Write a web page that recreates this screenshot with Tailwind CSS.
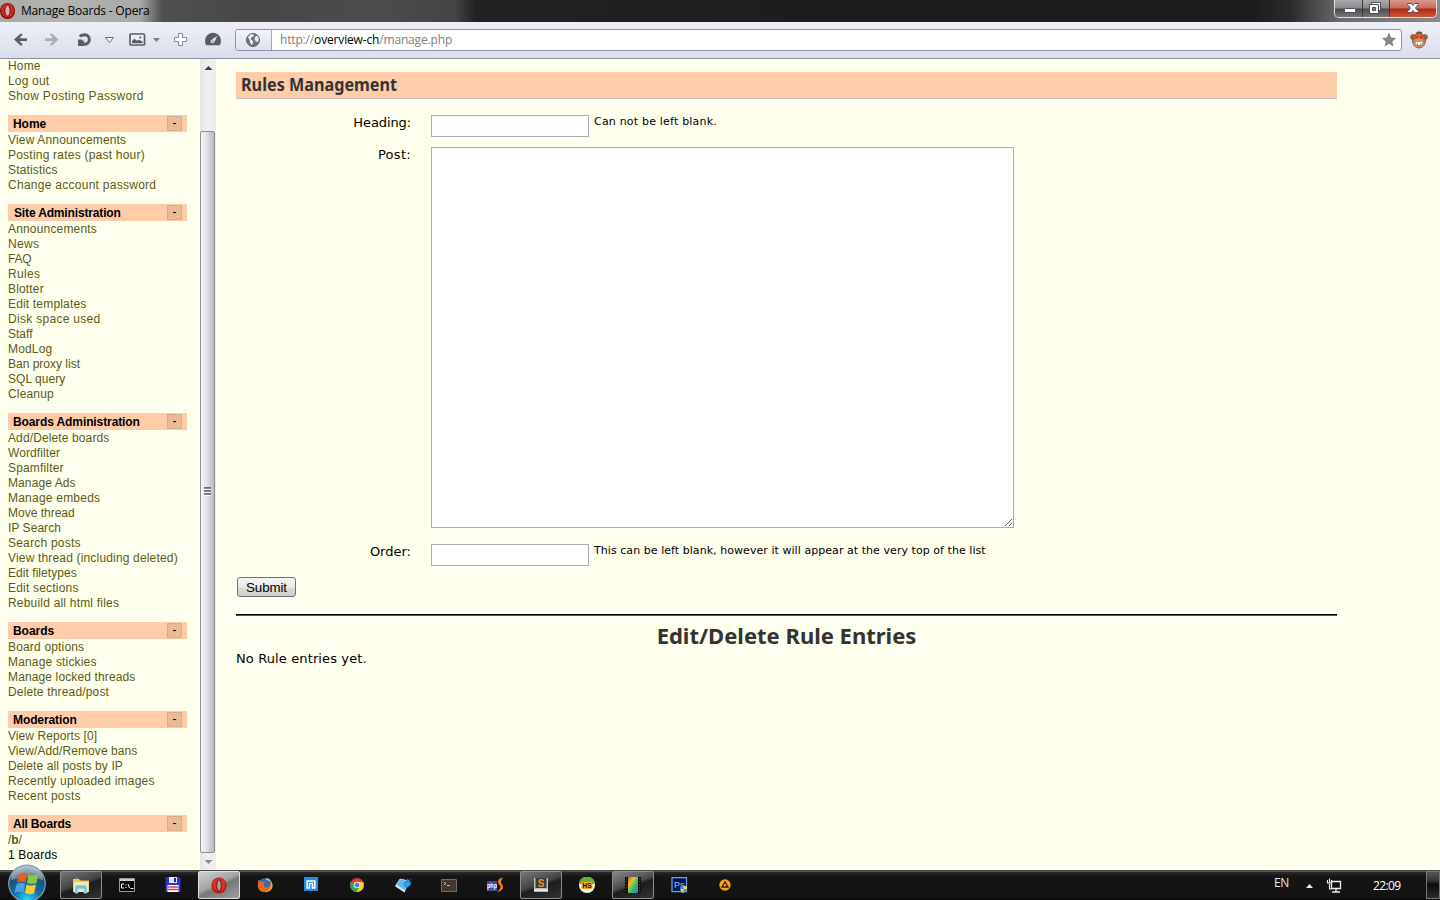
<!DOCTYPE html>
<html lang="en">
<head>
<meta charset="utf-8">
<title>Manage Boards - Opera</title>
<script src="https://cdn.jsdelivr.net/npm/@tailwindcss/browser@4"></script>
</head>
<body class="w-[1440px] h-[900px] overflow-hidden flex flex-col bg-[#ffffee] text-black">

<!-- Title bar -->
<header class="h-[22px] shrink-0 flex items-start justify-between bg-[linear-gradient(90deg,#a9a9a6_0px,#b4b4b2_60px,#a9a9a9_140px,#505050_162px,#474747_250px,#4c4c4c_380px,#444_455px,#222_475px,#1d1d1d_800px,#1c1c1c_1250px,#2a2a2a_1290px,#6b6b6b_1340px,#8a8a8a_1440px)]">
  <div class="flex items-center h-[22px]">
    <svg class="w-4 h-[22px]" viewBox="0 0 16 22"><ellipse cx="7.500" cy="11" rx="7.500" ry="8" fill="#7a0a0a"/><ellipse cx="7.500" cy="10.500" rx="6.500" ry="7" fill="#d8261f"/><ellipse cx="7.500" cy="10.700" rx="2.600" ry="5.400" fill="#c9b9b0" stroke="#7d1411"/></svg>
    <span class="ml-[5px] text-[12px] leading-[22px] tracking-[-0.2px] font-['Open_Sans','Noto_Sans',sans-serif] whitespace-nowrap">Manage Boards - Opera</span>
  </div>
  <div class="flex h-[18px] w-[103px] mr-[3px] rounded-b-[5px] border border-t-0 border-[#e0e0e0] overflow-hidden">
    <div class="w-[28px] border-r border-[#3a3a3a] bg-[linear-gradient(#aaa_0,#898989_8px,#4b4b4b_9px,#777_17px)]"><svg class="block w-[28px] h-[17px]" viewBox="0 0 28 17"><rect x="9.500" y="8.500" width="11" height="4" rx="1" fill="#fff" stroke="#4d4d5d"/></svg></div>
    <div class="w-[27px] border-r border-[#3a3a3a] bg-[linear-gradient(#aaa_0,#898989_8px,#4b4b4b_9px,#777_17px)]"><svg class="block w-[27px] h-[17px]" viewBox="0 0 27 17"><path d="M8.500 2.500h9v8h-9z" fill="#fff" stroke="#4d4d5d"/><path d="M6.500 4.500h9v9h-9z" fill="#fff" stroke="#4d4d5d"/><path d="M9.500 7.500h3v3h-3z" fill="#888" stroke="#4d4d5d"/></svg></div>
    <div class="flex-1 bg-[linear-gradient(#d79a8d_0,#c96a58_8px,#b02a12_9px,#d0563a_17px)]"><svg class="block w-[46px] h-[17px]" viewBox="0 0 46 17"><path d="M17.500 3.500h4l1.500 2 1.500-2h4v1l-3 3.500 3 3.500v1h-4l-1.500-2-1.500 2h-4v-1l3-3.500-3-3.500z" fill="#fff" stroke="#54506a"/></svg></div>
  </div>
</header>

<!-- Browser toolbar -->
<nav class="h-[37px] shrink-0 flex items-start border-b border-[#8b8e9f] bg-linear-to-b from-[#eef0f8] to-[#dadeec]">
  <svg class="w-[235px] h-[36px] shrink-0" viewBox="0 22 235 36">
    <path d="M14 39.500l6.500-5.800h1.800v1.300l-3 3.200H27v2.700h-7.700l3 3.200v1.300h-1.800z" fill="#5a5d66"/>
    <path d="M58.500 39.500l-6.500-5.800h-1.800v1.300l3 3.200H45v2.700h8.200l-3 3.200v1.300H52z" fill="#a9acb7"/>
    <path d="M79.800 36.600Q81.500 34.700 84.800 34.700a4.800 4.800 0 1 1-.5 9.600" fill="none" stroke="#5a5d66" stroke-width="3"/>
    <path d="M78 39.500h6.500v6.500H78z" fill="#5a5d66"/><path d="M81.500 39.300h3.200v3z" fill="#e5e8f2"/>
    <path d="M105.500 37.500h8l-4 5z" fill="#fff" stroke="#6a6d76"/>
    <rect x="130" y="34" width="14.500" height="11" rx=".8" fill="#eceef5" stroke="#5a5d66" stroke-width="1.700"/>
    <path d="M132 43.300v-2.300l2.500-2.200 2.500 2 2-1 3.500 1.700v1.800z" fill="#5a5d66"/><circle cx="140.300" cy="37.500" r="1.100" fill="#5a5d66"/>
    <path d="M153 38h7l-3.500 4z" fill="#7a7d87"/>
    <path d="M178.500 33.500h4v4h4v4h-4v4h-4v-4h-4v-4h4z" fill="#fff" stroke="#858894"/>
    <path d="M206.300 45.200a8 8 0 1 1 13.400 0z" fill="#5a5d66"/><path d="M211.300 42.700a2 2 0 0 1 .5-3l5.500-4-2.800 6a2 2 0 0 1-3.200 1z" fill="#eceef5"/><circle cx="212.900" cy="41.200" r=".8" fill="#5a5d66"/>
  </svg>
  <div class="mt-[7px] w-[1167px] h-[22px] flex rounded-[3px] border border-[#8f92a3] bg-white overflow-hidden">
    <div class="w-[36px] h-full border-r border-[#a5a8b8] bg-linear-to-b from-[#f2f4fa] to-[#dde1ee]">
      <svg class="w-[35px] h-[20px]" viewBox="236 30 35 20"><circle cx="253" cy="40" r="6.500" fill="#70737b" stroke="#5c5f67"/><path d="M248 37l3-3 3 .5-.5 2-2 .8-.8 2 2 1.500.5 1.700-1.500 2.500-1.500-2-.3-2zM255 37l2-1.500 2 3-1 3.500-2-.5-1.500-2z" fill="#e8ebf2"/></svg>
    </div>
    <div class="flex-1 pl-2 text-[12px] leading-[20px] tracking-[-0.16px] text-[#808080] font-['Open_Sans','Noto_Sans',sans-serif]">http://<span class="text-black">overview-ch</span>/manage.php</div>
    <svg class="w-[16px] h-[20px] mr-[4px]" viewBox="0 0 16 20"><path d="M8 2.500l2.100 4.900 5.100.5-3.900 3.500 1.200 5.200L8 13.800l-4.500 2.800 1.200-5.200L.8 7.900l5.100-.5z" fill="#85878c"/></svg>
  </div>
  <svg class="ml-[8px] mt-[8px] w-[18px] h-[20px]" viewBox="0 0 18 20"><circle cx="3" cy="7" r="2.500" fill="#b96436" stroke="#7b432a" stroke-width=".6"/><circle cx="15" cy="7" r="2.500" fill="#b96436" stroke="#7b432a" stroke-width=".6"/><path d="M6 3.500l1-2 1 1 1-2 1 2 2-1 0 2z" fill="#6b3a22"/><ellipse cx="9" cy="10.500" rx="6.500" ry="7.500" fill="#b5703f" stroke="#7b432a" stroke-width=".8"/><ellipse cx="9" cy="12.800" rx="5.600" ry="4.500" fill="#d99468"/><rect x="5.300" y="6" width="2.500" height="2.500" fill="#f0281f"/><rect x="10" y="6" width="2.500" height="2.500" fill="#f0281f"/><path d="M5 11.500l8-.5q.3 4.500-4 4.500t-4-4z" fill="#fff" stroke="#854b30" stroke-width=".6"/><path d="M7.500 11.500v3.500M10.500 11.500v3.500" stroke="#b98770" stroke-width=".6"/></svg>
</nav>

<div class="h-[811px] shrink-0 flex overflow-hidden">
  <!-- Admin menu -->
  <aside class="w-[200px] shrink-0 pl-2 pr-[13px] text-[12px] leading-[15px] tracking-[0.17px] text-[#5b5b14] whitespace-nowrap font-['Liberation_Sans',Arial,sans-serif]">
    <ul><li>Home</li><li>Log out</li><li class="tracking-[0.3px]">Show Posting Password</li></ul>
    <h2 class="mt-[11px] mb-px h-[17px] pl-[5px] pr-[5px] flex items-center justify-between bg-[#ffccaa] text-black font-bold tracking-[-0.05px] leading-[17px]"><span class="pt-px">Home</span><span class="w-[15px] h-[15px] border border-[#d9ab8e] bg-[#edba98] text-center leading-[12px] font-normal">-</span></h2>
    <ul><li>View Announcements</li><li class="tracking-[0.22px]">Posting rates (past hour)</li><li>Statistics</li><li class="tracking-[0.27px]">Change account password</li></ul>
    <h2 class="mt-[11px] mb-px h-[17px] pl-[6px] pr-[5px] flex items-center justify-between bg-[#ffccaa] text-black font-bold tracking-[-0.15px] leading-[17px]"><span class="pt-px">Site Administration</span><span class="w-[15px] h-[15px] border border-[#d9ab8e] bg-[#edba98] text-center leading-[12px] font-normal">-</span></h2>
    <ul><li>Announcements</li><li class="tracking-[0.3px]">News</li><li class="tracking-[-0.2px]">FAQ</li><li class="tracking-[0.3px]">Rules</li><li>Blotter</li><li>Edit templates</li><li class="tracking-[0.3px]">Disk space used</li><li class="tracking-[0px]">Staff</li><li>ModLog</li><li class="tracking-[0px]">Ban proxy list</li><li class="tracking-[0.03px]">SQL query</li><li>Cleanup</li></ul>
    <h2 class="mt-[11px] mb-px h-[17px] pl-[5px] pr-[5px] flex items-center justify-between bg-[#ffccaa] text-black font-bold tracking-[-0.1px] leading-[17px]"><span class="pt-px">Boards Administration</span><span class="w-[15px] h-[15px] border border-[#d9ab8e] bg-[#edba98] text-center leading-[12px] font-normal">-</span></h2>
    <ul><li class="tracking-[0.12px]">Add/Delete boards</li><li class="tracking-[0.1px]">Wordfilter</li><li>Spamfilter</li><li class="tracking-[0.1px]">Manage Ads</li><li class="tracking-[0.22px]">Manage embeds</li><li class="tracking-[0px]">Move thread</li><li class="tracking-[0.05px]">IP Search</li><li class="tracking-[0.22px]">Search posts</li><li>View thread (including deleted)</li><li class="tracking-[0.05px]">Edit filetypes</li><li class="tracking-[0.2px]">Edit sections</li><li class="tracking-[0.2px]">Rebuild all html files</li></ul>
    <h2 class="mt-[11px] mb-px h-[17px] pl-[5px] pr-[5px] flex items-center justify-between bg-[#ffccaa] text-black font-bold tracking-[-0.05px] leading-[17px]"><span class="pt-px">Boards</span><span class="w-[15px] h-[15px] border border-[#d9ab8e] bg-[#edba98] text-center leading-[12px] font-normal">-</span></h2>
    <ul><li>Board options</li><li>Manage stickies</li><li class="tracking-[0.13px]">Manage locked threads</li><li>Delete thread/post</li></ul>
    <h2 class="mt-[11px] mb-px h-[17px] pl-[5px] pr-[5px] flex items-center justify-between bg-[#ffccaa] text-black font-bold tracking-[-0.1px] leading-[17px]"><span class="pt-px">Moderation</span><span class="w-[15px] h-[15px] border border-[#d9ab8e] bg-[#edba98] text-center leading-[12px] font-normal">-</span></h2>
    <ul><li class="tracking-[0.08px]">View Reports [0]</li><li class="tracking-[0.08px]">View/Add/Remove bans</li><li class="tracking-[0.1px]">Delete all posts by IP</li><li class="tracking-[0.22px]">Recently uploaded images</li><li class="tracking-[0.22px]">Recent posts</li></ul>
    <h2 class="mt-[11px] mb-px h-[17px] pl-[5px] pr-[5px] flex items-center justify-between bg-[#ffccaa] text-black font-bold tracking-[-0.2px] leading-[17px]"><span class="pt-px">All Boards</span><span class="w-[15px] h-[15px] border border-[#d9ab8e] bg-[#edba98] text-center leading-[12px] font-normal">-</span></h2>
    <ul><li class="tracking-[-0.1px]">/<b>b</b>/</li><li class="text-black">1 Boards</li></ul>
  </aside>

  <!-- Menu scrollbar -->
  <div class="w-[16px] shrink-0 flex flex-col bg-linear-to-r from-[#e6e6e8] via-[#f0f0f1] to-[#ececee]">
    <svg class="w-4 h-[72px]" viewBox="0 0 16 72"><path d="M4.500 11h8L8.500 7z" fill="#404040"/></svg>
    <div class="h-[722px] w-[15px] flex items-center justify-center rounded-[2px] border border-[#8e8f96] bg-linear-to-r from-[#f6f6f7] via-[#dedee1] to-[#b9b9bf]">
      <svg class="w-[9px] h-[10px]" viewBox="0 0 9 10"><path d="M1 1h7M1 4h7M1 7h7" stroke="#4a4a4e" stroke-width="1.400"/><path d="M1 2.300h7M1 5.300h7M1 8.300h7" stroke="#fff" stroke-width="1"/></svg>
    </div>
    <svg class="w-4 h-[17px]" viewBox="0 0 16 17"><path d="M4.500 7h8l-4 4z" fill="#8a8a8a"/></svg>
  </div>

  <!-- Page -->
  <main class="w-[1121px] pl-[20px] pt-[13px] text-[13px] font-[Verdana,'DejaVu_Sans',sans-serif]">
    <h1 class="h-[27px] pl-[5px] bg-[#ffccaa] border-b border-[#c8c4cc] text-[#333] text-[17.300px] leading-[26px] font-bold whitespace-nowrap font-['Trebuchet_MS','Noto_Sans',sans-serif]"><span class="inline-block origin-left scale-x-[0.937]">Rules Management</span></h1>
    <div class="mt-4 h-[22px] flex">
      <label class="w-[175px] text-right leading-[16px] tracking-[-0.1px]">Heading:</label>
      <input class="ml-5 w-[158px] h-[22px] border border-[#abadb3] bg-white">
      <span class="ml-[5px] text-[11px] leading-[13px] tracking-[0.2px] whitespace-nowrap">Can not be left blank.</span>
    </div>
    <div class="mt-[10px] h-[381px] flex">
      <label class="w-[175px] text-right leading-[16px] tracking-[0.3px]">Post:</label>
      <textarea class="ml-5 w-[583px] h-[381px] border border-[#abadb3] bg-white"></textarea>
    </div>
    <div class="mt-4 h-[22px] flex">
      <label class="w-[175px] text-right leading-[16px]">Order:</label>
      <input class="ml-5 w-[158px] h-[22px] border border-[#abadb3] bg-white">
      <span class="ml-[5px] text-[11px] leading-[13px] tracking-[0.055px] whitespace-nowrap">This can be left blank, however it will appear at the very top of the list</span>
    </div>
    <button class="block mt-[11px] ml-px w-[59px] h-[20px] pt-px rounded-[3px] border border-[#707070] bg-[linear-gradient(#f3f3f3_0,#ebebeb_9px,#dcdcdc_10px,#cfcfcf_18px)] text-[13.330px] leading-[17px] tracking-[-0.1px] font-['Liberation_Sans',Arial,sans-serif]">Submit</button>
    <hr class="mt-[17px] h-[2px] border-t border-b border-t-black border-b-[#555]">
    <h2 class="mt-[5px] h-[28px] text-center text-[#333] text-[22px] leading-[28px] font-bold font-['Trebuchet_MS','Noto_Sans',sans-serif]"><span class="inline-block">Edit/Delete Rule Entries</span></h2>
    <p class="leading-[16px] mt-[2px] tracking-[0.12px]">No Rule entries yet.</p>
  </main>
</div>

<!-- Taskbar -->
<footer class="h-[30px] shrink-0 flex items-start bg-[linear-gradient(#161616_0,#777_1px,#2b2b2b_2px,#151515_6px,#121212_29px,#000_30px)]">
  <div class="w-[58px] h-[30px] relative">
    <svg class="absolute left-[7px] -top-[6px] w-[40px] h-[36px]" viewBox="0 0 40 36">
      <defs><radialGradient id="orb" cx=".5" cy=".95" r=".9"><stop offset="0" stop-color="#2fd6ff"/><stop offset=".4" stop-color="#1271a5"/><stop offset=".75" stop-color="#225072"/><stop offset="1" stop-color="#91a9ba"/></radialGradient></defs>
      <circle cx="20" cy="19.500" r="18.300" fill="url(#orb)" stroke="#7fa3b8" stroke-width="1.200"/>
      <path d="M4 16a16 14 0 0 1 32 0q-16-5-32 0z" fill="#fff" opacity=".3"/>
      <path d="M12 10.500q4-3 8-.5l-1.500 8.500q-4-2-8.500.5z" fill="#ee5a24"/><path d="M21.500 10.500q4.500 2 10-.5l-2 9q-5 2-9.500 0z" fill="#8cc541"/><path d="M9.500 20.500q4.500-3 8.500-.5l-1.500 8.500q-4-2-9 .5z" fill="#4aa4ea"/><path d="M19.500 20.500q4.500 2 9.500 0l-2 9q-5 1.500-9-.5z" fill="#fdc830"/>
    </svg>
  </div>
  <div class="flex h-[30px]">
    <div class="w-[46px] px-[2px] pt-px"><div class="h-[28px] flex items-center justify-center rounded-[2px] border border-[#8d8d8d] bg-[linear-gradient(160deg,#777,#444_45%,#1c1c1c_55%,#333)]">
      <svg class="w-[18px] h-[18px]" viewBox="0 0 18 18"><path d="M1 3h6l1.500 1.500H17V16H1z" fill="#e5cb69"/><path d="M2 6h14.500v10H2z" fill="#f8e8a0"/><path d="M3 17v-6q0-2 2-2h8q2 0 2 2v6h-3v-4H6v4z" fill="#71bfe6" stroke="#d7f0fb" stroke-width=".7"/><path d="M3 2h3" stroke="#60b34b"/></svg></div></div>
    <div class="w-[46px] flex items-center justify-center"><svg class="w-[16px] h-[14px]" viewBox="0 0 16 14"><path d="M.5.5h15v13H.5z" fill="#000" stroke="#9a9a9a"/><path d="M1 2h14" stroke="#ccc" stroke-width="2"/><path d="M5 6H2.500v4H5M7 6.500v1M7 9v1M9 6l1.500 4M11.500 10.500h3" fill="none" stroke="#fff"/></svg></div>
    <div class="w-[46px] flex items-center justify-center"><svg class="w-[16px] h-[16px]" viewBox="0 0 16 16"><path d="M1 0h13l1.500 1.500V15H.5V0z" fill="#2736d2"/><path d="M4 0h8v6H4z" fill="#dde3f8"/><path d="M9 1h2v4H9z" fill="#1c2486"/><path d="M2.500 8h11v7h-11z" fill="#fff"/><path d="M3 10h10M3 12.500h10" stroke="#e43b45" stroke-width="1.300"/></svg></div>
    <div class="w-[46px] px-[2px] pt-px"><div class="h-[28px] flex items-center justify-center rounded-[2px] border border-[#e0e0e0] bg-[linear-gradient(155deg,#d0d0d0,#a4a4a4_45%,#777_55%,#a0a0a0)]">
      <svg class="w-[16px] h-[17px]" viewBox="0 0 16 17"><ellipse cx="8" cy="8.500" rx="7.500" ry="8" fill="#b6120e"/><ellipse cx="8" cy="8" rx="6.500" ry="7" fill="#dc3025"/><ellipse cx="8" cy="8.500" rx="2.300" ry="5.800" fill="#a0a0a0" stroke="#750d0b"/></svg></div></div>
    <div class="w-[46px] flex items-center justify-center"><svg class="w-[16px] h-[16px]" viewBox="0 0 16 16"><circle cx="8" cy="8" r="6.800" fill="#2d6fb5"/><path d="M9 2q3 0 4 2" stroke="#7fc5ef" stroke-width="2" fill="none"/><path d="M1.500 2.500L4 4.500l4 .8-1.500 2 1 2.500 3 1 2.500-2.500.5-5q2.500 3 1.500 7-2 5-7 5Q.5 15 .8 8z" fill="#e7681d"/><path d="M13 4q2.500 4 0 8-2 2.500-5 3 6 0 7.500-5 .5-4-2.500-6z" fill="#f7b72d"/></svg></div>
    <div class="w-[46px] flex items-center justify-center pb-[3px]"><svg class="w-[14px] h-[14px]" viewBox="0 0 14 14"><path d="M0 0h14v14H0z" fill="#228be8"/><path d="M3.200 11V4h7.600v7H8.500V6.500h-3V11z" fill="none" stroke="#fff" stroke-width="1.500"/></svg></div>
    <div class="w-[46px] flex items-center justify-center"><svg class="w-[14px] h-[14px]" viewBox="0 0 14 14"><circle cx="7" cy="7" r="7" fill="#e0382b"/><path d="M7 7L.9 3.600A7 7 0 0 0 6.500 14l3.200-5.500z" fill="#2fa44c"/><path d="M7 7l2.700 1.500L6.500 14A7 7 0 0 0 13.200 4H7z" fill="#f7cc1f"/><circle cx="7" cy="7" r="3.300" fill="#fff"/><circle cx="7" cy="7" r="2.500" fill="#4482ea"/></svg></div>
    <div class="w-[46px] flex items-center justify-center"><svg class="w-[17px] h-[17px]" viewBox="0 0 17 17"><path d="M5 2l9 2L9.500 14.500.500 9z" fill="#67b8ea" stroke="#d8eef8" stroke-width=".8"/><path d="M.5 9.500l9 6 .7-2-9-6z" fill="#d8e9f2"/><path d="M12 4.500l1-3M14 5l2-3M9 6.500q0 4 3.500 3.500 3-1 3.500-4.500l-5-1.500z" stroke="#1687cf" fill="#2ea5e8"/></svg></div>
    <div class="w-[46px] flex items-center justify-center"><svg class="w-[16px] h-[13px]" viewBox="0 0 16 13"><path d="M.5.5h15v12H.5z" fill="#43372f" stroke="#786b60"/><path d="M3 3l2 1.500L3 6M6 6.500h3" fill="none" stroke="#ddd" stroke-width=".8"/></svg></div>
    <div class="w-[46px] flex items-center justify-center"><svg class="w-[17px] h-[16px]" viewBox="0 0 17 16"><path d="M0 4h10v10H0z" fill="#434a9e"/><text x="0" y="11" font-family="Liberation Sans" font-size="8" font-weight="bold" fill="#fff" textLength="10" lengthAdjust="spacingAndGlyphs">php</text><path d="M16 .5q-5 1-5 4 0 2 2 4t-3 6.500q6-1 6-5 0-2-1.500-3.500T16 .5z" fill="#f47b20"/></svg></div>
    <div class="w-[46px] px-[2px] pt-px"><div class="h-[28px] flex items-center justify-center rounded-[2px] border border-[#8d8d8d] bg-[linear-gradient(160deg,#777,#444_45%,#1c1c1c_55%,#333)]">
      <svg class="w-[16px] h-[16px]" viewBox="0 0 16 16"><path d="M1 1h14v13.500H1z" fill="#bcbcbc"/><path d="M2.500 1h11v10h-11z" fill="#3a3a3a"/><path d="M1 12.500h14v2H1z" fill="#eee"/><text x="4.800" y="9.500" font-family="Liberation Sans" font-size="10" font-weight="bold" fill="#f39622">S</text></svg></div></div>
    <div class="w-[46px] flex items-center justify-center"><svg class="w-[16px] h-[16px]" viewBox="0 0 16 16"><circle cx="8" cy="8" r="8" fill="#f5f5f0"/><path d="M0 7a8 7.500 0 0 1 16 0z" fill="#65b22e"/><rect x="2.500" y="5" width="11" height="7" rx="1" fill="#f9a51a"/><text x="3.500" y="11" font-family="Liberation Sans" font-size="7" font-weight="bold" fill="#1a1200" textLength="9" lengthAdjust="spacingAndGlyphs">HS</text></svg></div>
    <div class="w-[46px] px-[2px] pt-px"><div class="h-[28px] flex items-center justify-center rounded-[2px] border border-[#8d8d8d] bg-[linear-gradient(160deg,#888,#4c4c4c_45%,#1c1c1c_55%,#333)]">
      <svg class="w-[16px] h-[16px]" viewBox="0 0 16 16"><defs><linearGradient id="film" x1="0" y1="0" x2="1" y2="1"><stop offset="0" stop-color="#e8452a"/><stop offset=".3" stop-color="#f3c426"/><stop offset=".6" stop-color="#3cc06a"/><stop offset="1" stop-color="#2878d8"/></linearGradient></defs><path d="M0 0h16v16H0z" fill="#0c0c0c"/><path d="M3 0h10v16H3z" fill="url(#film)"/><path d="M1.300 1v15M14.700 1v15" stroke="#555" stroke-width="1" stroke-dasharray="1.500 1.500"/></svg></div></div>
    <div class="w-[46px] flex items-center justify-center"><svg class="w-[17px] h-[16px]" viewBox="0 0 17 16"><path d="M1 .7h14.500v14H1z" fill="#0a1450" stroke="#6fa4ee" stroke-width="1.200"/><text x="3" y="10.500" font-family="Liberation Sans" font-size="9" fill="#8fc0ff">Ps</text><path d="M9 9.500q2 0 3.500-1.500Q14 9.500 16 9.500q0 5-3.500 6.500Q9 14.500 9 9.500z" fill="#3b8be6"/><path d="M12.500 8Q14 9.500 16 9.500v2.500h-3.500zM9.200 12h3.300v4q-2.800-1-3.300-4z" fill="#f8d54a"/></svg></div>
    <div class="w-[46px] flex items-center justify-center"><svg class="w-[12px] h-[12px]" viewBox="0 0 12 12"><circle cx="6" cy="6" r="5.700" fill="#f6a41c"/><path d="M6 2.800L9 8H3z" fill="none" stroke="#2d1c00" stroke-width="1.300"/></svg></div>
  </div>
  <div class="flex-1"></div>
  <div class="flex h-[30px] text-[#e8e8e8] text-[12px] font-['Open_Sans','Noto_Sans',sans-serif]">
    <span class="w-[32px] leading-[26px] tracking-[-0.3px]">EN</span>
    <svg class="w-[38px] h-[30px]" viewBox="1306 870 38 30"><path d="M1306 888h7l-3.500-4z" fill="#eee"/><path d="M1331.500 881.500h9v7h-9z" fill="#111" stroke="#eee" stroke-width="1.300"/><path d="M1336 889v3M1332 892h8" stroke="#eee" stroke-width="1.400"/><path d="M1327.500 880v3h4v-3M1329.500 878.500v4M1329.500 884v5h2" fill="none" stroke="#eee" stroke-width="1.100"/></svg>
    <span class="ml-[29px] w-[53px] leading-[31px] tracking-[-0.6px] text-white">22:09</span>
    <div class="mt-px w-[14px] h-[28px] border border-[#777] bg-[linear-gradient(#555_0,#333_9px,#0c0c0c_12px,#2b2b2b)]"></div>
  </div>
</footer>
</body>
</html>
